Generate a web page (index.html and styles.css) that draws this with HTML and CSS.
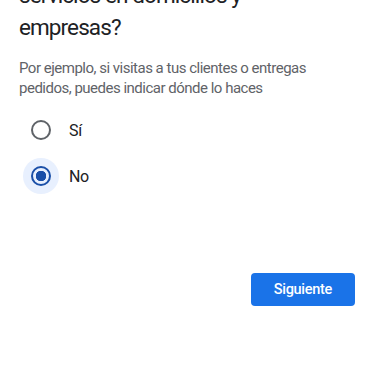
FILE: index.html
```html
<!DOCTYPE html>
<html lang="es">
<head>
    <meta charset="UTF-8">
    <meta name="viewport" content="width=device-width, initial-scale=1.0">
    <title>Perfil de empresa</title>
    <link rel="stylesheet" href="styles.css">
</head>
<body>
    <div class="page">
        <h1 class="title">¿Ofreces entregas o<br>servicios en domicilios y<br>empresas?</h1>
        <p class="hint">Por ejemplo, si visitas a tus clientes o entregas pedidos, puedes indicar dónde lo haces</p>

        <div class="options">
            <label class="option">
                <input type="radio" name="service" value="si">
                <span class="radio"></span>
                <span class="label">Sí</span>
            </label>
            <label class="option">
                <input type="radio" name="service" value="no" checked>
                <span class="radio"></span>
                <span class="label">No</span>
            </label>
        </div>

        <div class="actions">
            <button class="button">Siguiente</button>
        </div>
    </div>
</body>
</html>
```

FILE: styles.css
```css
body {
    font-family: Roboto, "Noto Sans", Arial, sans-serif;
    margin: 0;
    background: #fff;
    color: #202124;
    overflow: hidden;
}
.page {
    padding: 0 20px 0 19px;
    margin-top: -53px; /* page is scrolled down */
}
.title {
    font-size: 22.5px;
    font-weight: 400;
    line-height: 32px;
    letter-spacing: -0.9px;
    margin: 0;
}
.hint {
    font-size: 15px;
    line-height: 20px;
    letter-spacing: -0.5px;
    color: #5f6368;
    margin: 15px 0 0;
}
.options {
    margin-top: 9px;
}
.option {
    display: flex;
    align-items: center;
    height: 46px;
    cursor: pointer;
}
.option input {
    display: none;
}
.radio {
    width: 36px;
    height: 36px;
    margin-left: 4px;
    border-radius: 50%;
    display: flex;
    align-items: center;
    justify-content: center;
}
.radio::before {
    content: "";
    width: 16px;
    height: 16px;
    border: 2px solid #5f6368;
    border-radius: 50%;
    box-sizing: content-box;
}
.option input:checked + .radio {
    background: #e8f0fe;
}
.option input:checked + .radio::before {
    border-color: #1a4fa8;
    background: radial-gradient(circle, #1a4fa8 0 5px, transparent 5.5px);
}
.label {
    font-size: 16px;
    letter-spacing: -0.3px;
    margin-left: 10px;
}
.actions {
    display: flex;
    justify-content: flex-end;
    margin-top: 74px;
}
.button {
    font-family: Roboto, Arial, sans-serif;
    font-size: 14.5px;
    font-weight: 500;
    letter-spacing: -0.3px;
    color: #fff;
    background: #1a73e8;
    border: none;
    border-radius: 4px;
    height: 33px;
    padding: 0 23px;
    cursor: pointer;
}
```
